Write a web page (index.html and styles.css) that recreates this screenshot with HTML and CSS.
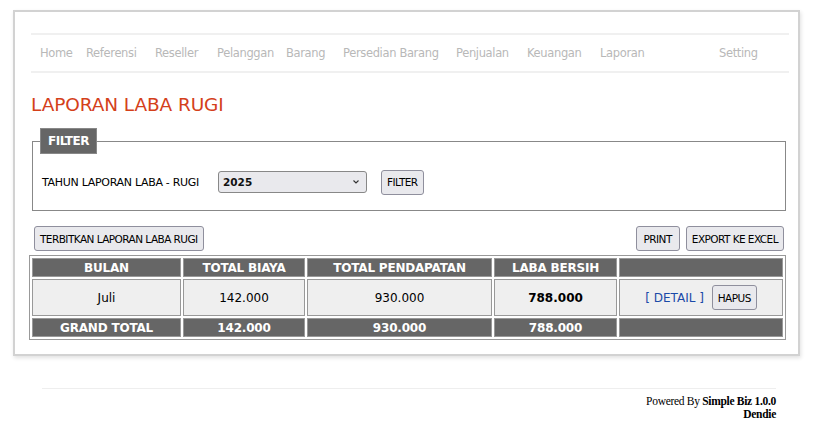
FILE: index.html
```html
<!DOCTYPE html>
<html>
<head>
<meta charset="utf-8">
<link rel="stylesheet" href="styles.css">
</head>
<body>
<div class="card">
  <nav class="nav">
    <a class="n-home">Home</a>
    <a class="n-ref">Referensi</a>
    <a class="n-res">Reseller</a>
    <a class="n-pel">Pelanggan</a>
    <a class="n-bar">Barang</a>
    <a class="n-per">Persedian Barang</a>
    <a class="n-pen">Penjualan</a>
    <a class="n-keu">Keuangan</a>
    <a class="n-lap">Laporan</a>
    <a class="n-set">Setting</a>
  </nav>
  <h1 class="title">LAPORAN LABA RUGI</h1>
  <fieldset class="filter">
    <legend>FILTER</legend>
    <div class="filter-row">
      <span class="lbl">TAHUN LAPORAN LABA - RUGI</span>
      <div class="select"><span>2025</span><svg width="8" height="6" viewBox="0 0 8 6"><path d="M1.5 1.5 L4 4 L6.5 1.5" fill="none" stroke="#333" stroke-width="1.1"/></svg></div>
      <button class="btn">FILTER</button>
    </div>
  </fieldset>
  <div class="actions">
    <button class="btn">TERBITKAN LAPORAN LABA RUGI</button>
    <div class="right">
      <button class="btn">PRINT</button>
      <button class="btn">EXPORT KE EXCEL</button>
    </div>
  </div>
  <table class="tbl">
    <thead>
      <tr><th class="c1">BULAN</th><th class="c2">TOTAL BIAYA</th><th class="c3">TOTAL PENDAPATAN</th><th class="c4">LABA BERSIH</th><th class="c5"></th></tr>
    </thead>
    <tbody>
      <tr><td>Juli</td><td>142.000</td><td>930.000</td><td class="b">788.000</td><td><a class="detail">[ DETAIL ]</a> <button class="btn small">HAPUS</button></td></tr>
    </tbody>
    <tfoot>
      <tr><th>GRAND TOTAL</th><th>142.000</th><th>930.000</th><th>788.000</th><th></th></tr>
    </tfoot>
  </table>
</div>
<footer class="foot">
  <div>Powered By <b>Simple Biz 1.0.0</b></div>
  <div><b>Dendie</b></div>
</footer>
</body>
</html>
```
FILE: styles.css
```css
html, body { margin: 0; padding: 0; background: #fff; }
body { font-family: "DejaVu Sans", Verdana, sans-serif; font-size: 11px; color: #000; }
.card {
  margin: 10px 0 0 13px;
  width: 787px;
  height: 346px;
  border: 2px solid #d2d2d2;
  box-shadow: 1px 2px 4px rgba(0,0,0,0.12);
  padding: 21px 0 0 16px;
  box-sizing: border-box;
  position: relative;
}
.nav {
  width: 758px;
  height: 40px;
  border-top: 2px solid #f0f0f0;
  border-bottom: 2px solid #f0f0f0;
  box-sizing: border-box;
  position: relative;
  font-size: 11.5px;
  letter-spacing: -0.35px;
}
.nav a { position: absolute; top: 11px; color: #b8b8b8; }
.n-home { left: 9px; } .n-ref { left: 55px; } .n-res { left: 124px; } .n-pel { left: 186px; }
.n-bar { left: 255px; } .n-per { left: 312px; } .n-pen { left: 425px; } .n-keu { left: 496px; }
.n-lap { left: 569px; } .n-set { left: 688px; }
.title {
  margin: 20px 0 0 0;
  font-weight: normal;
  font-size: 18.5px;
  letter-spacing: -0.1px;
  color: #d4401a;
  height: 24px;
  line-height: 24px;
}
.filter {
  margin: 11px 0 0 1px;
  width: 754px;
  height: 83px;
  box-sizing: border-box;
  border: 1px solid #888;
  padding: 0 0 0 9px;
  position: relative;
}
.filter legend {
  background: #666;
  color: #fff;
  font-weight: bold;
  font-size: 12px;
  padding: 5px 7px 5px 7px;
  margin-left: -2px;
  border: 1px solid #888;
  letter-spacing: -0.5px;
}
.filter-row { display: flex; align-items: center; margin-top: 15px; height: 26px; }
.lbl { width: 176px; letter-spacing: -0.3px; }
.select {
  width: 149px; height: 22px; box-sizing: border-box;
  border: 1px solid #888; border-radius: 3px; background: #e9e9ed;
  display: flex; align-items: center; justify-content: space-between;
  padding: 0 6px 0 4px; font-weight: bold; font-size: 10.5px; color: #111;
}
.btn {
  font-family: inherit; font-size: 10.5px; letter-spacing: -0.55px;
  border: 1px solid #8f8f9d; border-radius: 3px; background: #e9e9ed; color: #000;
  height: 25px; padding: 0 5px; margin: 0;
}
.filter-row .btn { margin-left: 14px; }
.actions {
  display: flex; justify-content: space-between; align-items: center;
  width: 750px; margin: 15px 0 0 3px; height: 25px;
}
.right { display: flex; gap: 6px; }
.right .btn:first-child { padding: 0 7px; }
.tbl {
  margin: 4px 0 0 -2px;
  width: 757px;
  border: 1px solid #999;
  border-spacing: 2px;
  font-size: 12px;
}
.tbl th, .tbl td { border: 1px solid #999; text-align: center; padding: 0; }
.tbl th { background: #666; color: #fff; font-weight: bold; height: 17px; letter-spacing: -0.2px; }
.tbl td { background: #efefef; height: 35px; }
.tbl .c1 { width: 147px; } .tbl .c2 { width: 120px; } .tbl .c3 { width: 183px; } .tbl .c4 { width: 121px; }
.b { font-weight: bold; }
.detail { color: #1a4aa8; font-size: 12px; }
.btn.small { height: 25px; padding: 0 5px; font-weight: normal; margin-left: 4px; }
.foot {
  margin: 32px 0 0 42px;
  width: 734px;
  border-top: 1px solid #eee;
  padding-top: 6px;
  text-align: right;
  font-family: "Liberation Serif", "Times New Roman", serif;
  font-size: 11.5px;
  line-height: 13px;
  letter-spacing: -0.3px;
}
```
